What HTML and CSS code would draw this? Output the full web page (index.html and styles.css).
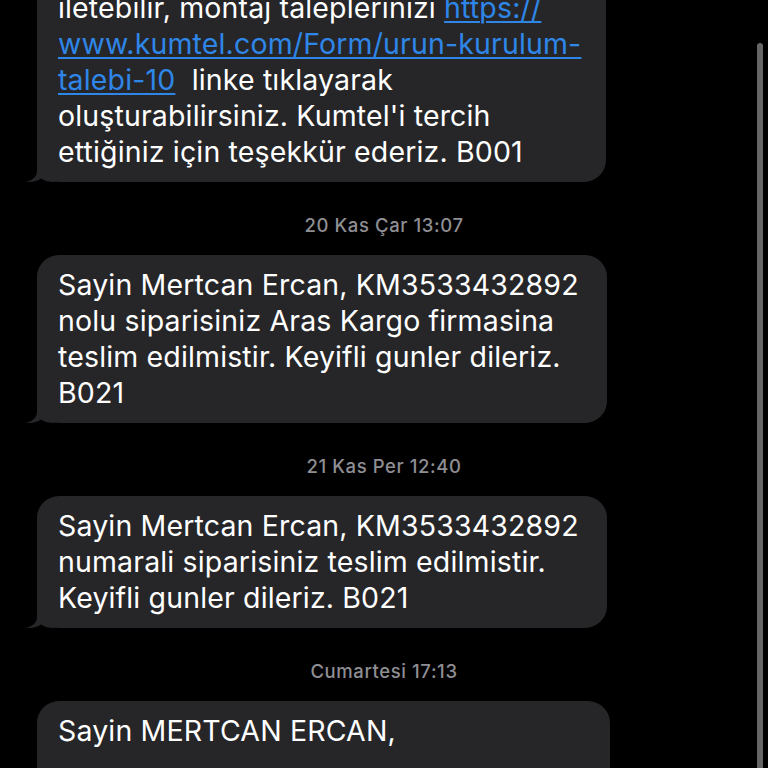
FILE: index.html
```html
<!DOCTYPE html>
<html lang="tr">
<head>
<meta charset="utf-8">
<title>Mesajlar</title>
<link rel="stylesheet" href="styles.css">
</head>
<body>
<div class="thread">
  <div class="msg msg-first">
    <p class="text">iletebilir, montaj taleplerinizi <a href="#">https://</a><br><a href="#">www.kumtel.com/Form/urun-kurulum-</a><br><a href="#">talebi-10</a>&nbsp; linke tıklayarak<br>oluşturabilirsiniz. Kumtel'i tercih<br>ettiğiniz için teşekkür ederiz. B001</p>
    <svg class="tail" viewBox="0 0 30 24"><path d="M12 0 V13 C12 18.5 7.5 22.5 0.5 24 C7.5 24.6 12.5 22.8 16 20.5 C19 23 24 24 30 24 V0 Z"/></svg>
  </div>
  <div class="stamp">20 Kas Çar 13:07</div>
  <div class="msg msg-2">
    <p class="text">Sayin Mertcan Ercan, KM3533432892<br>nolu siparisiniz Aras Kargo firmasina<br>teslim edilmistir. Keyifli gunler dileriz.<br>B021</p>
    <svg class="tail" viewBox="0 0 30 24"><path d="M12 0 V13 C12 18.5 7.5 22.5 0.5 24 C7.5 24.6 12.5 22.8 16 20.5 C19 23 24 24 30 24 V0 Z"/></svg>
  </div>
  <div class="stamp">21 Kas Per 12:40</div>
  <div class="msg msg-3">
    <p class="text">Sayin Mertcan Ercan, KM3533432892<br>numarali siparisiniz teslim edilmistir.<br>Keyifli gunler dileriz. B021</p>
    <svg class="tail" viewBox="0 0 30 24"><path d="M12 0 V13 C12 18.5 7.5 22.5 0.5 24 C7.5 24.6 12.5 22.8 16 20.5 C19 23 24 24 30 24 V0 Z"/></svg>
  </div>
  <div class="stamp">Cumartesi 17:13</div>
  <div class="msg msg-4">
    <p class="text">Sayin MERTCAN ERCAN,</p>
  </div>
</div>
<div class="scrollbar"></div>
</body>
</html>
```
FILE: styles.css
```css
html, body {
  margin: 0;
  padding: 0;
  background: #000;
  height: 768px;
  overflow: hidden;
}

body {
  font-family: Inter, "Noto Sans", sans-serif;
  -webkit-font-smoothing: antialiased;
}

.thread {
  display: flex;
  flex-direction: column;
  align-items: flex-start;
}

.msg {
  position: relative;
  box-sizing: border-box;
  margin-left: 37px;
  background: #262629;
  border-radius: 22px;
  padding: 12px 0 12px 21px;
  color: #fff;
}

.msg-first {
  width: 569px;
  margin-top: -60px;
  padding-top: 50px;
}

.msg-2,
.msg-3 {
  width: 570px;
}

.msg-4 {
  width: 573px;
  padding-bottom: 60px;
}

.text {
  margin: 0;
  font-size: 28.5px;
  line-height: 36px;
  letter-spacing: 0.15px;
  white-space: nowrap;
}

.text a {
  color: #2e86e8;
  text-decoration: underline;
  text-decoration-thickness: 2px;
  text-underline-offset: 3px;
}

.tail {
  position: absolute;
  left: -12px;
  bottom: 0;
  width: 30px;
  height: 24px;
  fill: #262629;
}

.stamp {
  align-self: stretch;
  text-align: center;
  font-size: 18.5px;
  line-height: 22px;
  font-weight: 500;
  letter-spacing: 0.6px;
  color: #8e8e93;
  margin: 32px 0 19px;
}

.scrollbar {
  position: fixed;
  top: 43px;
  right: 5px;
  width: 6px;
  height: 740px;
  border-radius: 3px;
  background: #666668;
}
```
